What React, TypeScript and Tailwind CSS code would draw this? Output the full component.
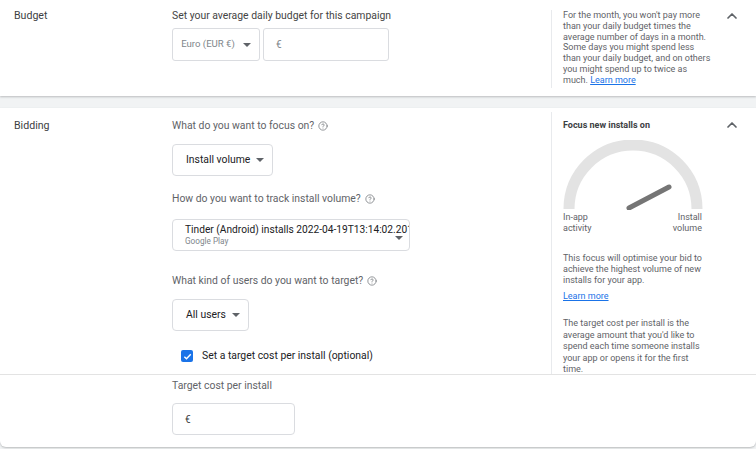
import { ChevronUp, CircleHelp } from "lucide-react";

function Caret() {
  return (
    <svg width="8" height="4" viewBox="0 0 8 4" className="shrink-0">
      <path d="M0 0h8L4 4z" fill="#5f6368" />
    </svg>
  );
}

function Help() {
  return <CircleHelp size={10} strokeWidth={1.6} className="ml-[4px] text-[#5f6368]" />;
}

function Question({ children }: { children: React.ReactNode }) {
  return (
    <div className="flex items-center text-[10.4px] leading-[14px] text-[#5f6368]">
      {children}
      <Help />
    </div>
  );
}

function Select({ label }: { label: string }) {
  return (
    <div className="flex h-[32px] w-fit items-center gap-[6px] rounded-[4px] border border-[#dadce0] pl-[13px] pr-[8px] text-[10.4px] text-[#202124]">
      {label}
      <Caret />
    </div>
  );
}

export default function App() {
  return (
    <div className="h-[449px] w-[756px] overflow-hidden bg-[#f1f3f4] font-['Roboto',sans-serif] text-[#3c4043]">
      {/* Budget */}
      <section className="flex h-[96px] bg-white shadow-[0_1px_2px_rgba(60,64,67,0.3)]">
        <div className="w-[172px] pl-[14px] pt-[9px] text-[10.6px] leading-[14px]">Budget</div>
        <div className="flex-1 pt-[9px]">
          <div className="text-[10.4px] leading-[14px] text-[#444]">
            Set your average daily budget for this campaign
          </div>
          <div className="mt-[5px] flex gap-[3px]">
            <div className="flex h-[33px] w-[88px] items-center justify-center gap-[8px] rounded-[3px] border border-[#dadce0] text-[9.6px] text-[#80868b]">
              Euro (EUR €)
              <Caret />
            </div>
            <div className="flex h-[33px] w-[126px] items-center rounded-[3px] border border-[#dadce0] pl-[12px] text-[10px] text-[#80868b]">
              €
            </div>
          </div>
        </div>
        <aside className="mb-[8px] mt-[10px] flex w-[205px] border-l border-[#e8eaed] pl-[11px]">
          <p className="w-[150px] text-[9px] leading-[10.8px] text-[#5f6368]">
            For the month, you won't pay more than your daily budget times the average number of days in a
            month. Some days you might spend less than your daily budget, and on others you might spend up to
            twice as much. <span className="text-[#1a73e8] underline">Learn more</span>
          </p>
          <ChevronUp size={16} strokeWidth={2.6} className="ml-auto mr-[16px] mt-[-2px] shrink-0 text-[#5f6368]" />
        </aside>
      </section>

      {/* Bidding */}
      <section className="mt-[12px] flex flex-col rounded-b-[6px] bg-white shadow-[0_1px_2px_rgba(60,64,67,0.3)]">
        <div className="flex h-[266px] overflow-hidden">
          <div className="w-[172px] pl-[14px] pt-[11px] text-[10.6px] leading-[14px]">Bidding</div>
          <div className="flex-1 pt-[11px]">
            <Question>What do you want to focus on?</Question>
            <div className="mt-[11px]">
              <Select label="Install volume" />
            </div>
            <div className="mt-[16px]">
              <Question>How do you want to track install volume?</Question>
            </div>
            <div className="relative mt-[13px] flex h-[32px] w-[238px] flex-col justify-center overflow-hidden rounded-[4px] border border-[#dadce0] pl-[12px]">
              <div className="whitespace-nowrap text-[10.2px] leading-[13px] text-[#202124]">
                Tinder (Android) installs 2022-04-19T13:14:02.201
              </div>
              <div className="text-[8.2px] leading-[11px] text-[#80868b]">Google Play</div>
              <div className="absolute right-[6px] top-[16px]">
                <Caret />
              </div>
            </div>
            <div className="mt-[23px]">
              <Question>What kind of users do you want to target?</Question>
            </div>
            <div className="mt-[11px]">
              <Select label="All users" />
            </div>
            <label className="ml-[9px] mt-[19px] flex items-center gap-[9px] text-[10.4px] leading-[12px] text-[#202124]">
              <span className="flex h-[12px] w-[12px] items-center justify-center rounded-[2px] bg-[#1a73e8]">
                <svg width="9" height="9" viewBox="0 0 10 10">
                  <path d="M1.5 5.2l2.4 2.3L8.6 2.6" fill="none" stroke="white" strokeWidth="1.6" />
                </svg>
              </span>
              Set a target cost per install (optional)
            </label>
          </div>
          <aside className="mt-[4px] flex w-[205px] flex-col items-start border-l border-[#e8eaed] pl-[11px]">
            <div className="flex w-full items-center pt-[5px]">
              <div className="text-[9px] font-bold leading-[12px] text-[#3c4043]">Focus new installs on</div>
              <ChevronUp size={16} strokeWidth={2.6} className="ml-auto mr-[16px] text-[#5f6368]" />
            </div>
            <svg width="140" height="70" viewBox="0 0 140 70" className="mt-[7px] shrink-0">
              <path d="M6 69A64 64 0 0 1 134 69" fill="none" stroke="#e3e3e3" strokeWidth="11" />
              <path d="M66 68L106 47" stroke="#757575" strokeWidth="5" strokeLinecap="round" />
            </svg>
            <div className="mt-[2px] flex w-[139px] justify-between text-[9px] leading-[10.5px] text-[#5f6368]">
              <span>
                In-app
                <br />
                activity
              </span>
              <span className="text-right">
                Install
                <br />
                volume
              </span>
            </div>
            <p className="mt-[20px] w-[146px] text-[9px] leading-[11px] text-[#5f6368]">
              This focus will optimise your bid to achieve the highest volume of new installs for your app.
            </p>
            <a className="mt-[5px] text-[9px] leading-[11px] text-[#1a73e8] underline">Learn more</a>
            <p className="mt-[16px] w-[146px] text-[9px] leading-[11.5px] text-[#5f6368]">
              The target cost per install is the average amount that you'd like to spend each time someone
              installs your app or opens it for the first time.
            </p>
          </aside>
        </div>
        <div className="h-[73px] border-t border-[#e3e3e3] pl-[172px] pt-[4px]">
          <div className="text-[10.4px] leading-[14px] text-[#5f6368]">Target cost per install</div>
          <div className="mt-[10px] flex h-[32px] w-[123px] items-center rounded-[4px] border border-[#dadce0] pl-[12px] text-[10px] text-[#3c4043]">
            €
          </div>
        </div>
      </section>
    </div>
  );
}
